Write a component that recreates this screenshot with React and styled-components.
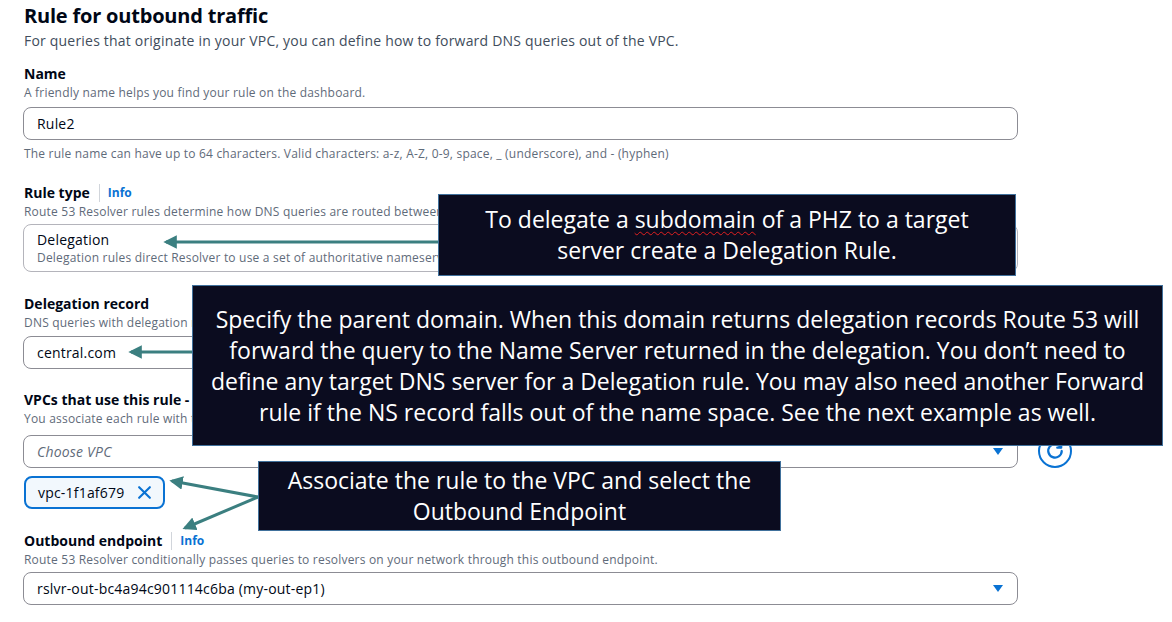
import React from "react"
import styled, { createGlobalStyle } from 'styled-components'

const Colors = {
  text: '#000716',
  muted: '#5f6b7a',
  blue: '#0972d3',
  border: '#8c8c94',
  teal: '#3b7f80',
  navy: '#0b0c1f',
  calloutBorder: '#41719c'
}

const GlobalStyle = createGlobalStyle`
  body {
    margin: 0;
    background: #fff;
    font-family: "Open Sans", "Liberation Sans", sans-serif;
    color: ${Colors.text};
  }
`

const Page = styled.div`
  position: relative;
  width: 1172px;
  height: 622px;
  overflow: hidden;
  padding: 4px 0 0 23px;
  box-sizing: border-box;
`

const Form = styled.div`
  width: 995px;
  display: flex;
  flex-direction: column;
  letter-spacing: 0.2px;
`

const Title = styled.h1`
  margin: 0 0 0 1px;
  font-size: 20px;
  line-height: 24px;
  font-weight: 700;
  letter-spacing: -0.2px;
`

const Subtitle = styled.p`
  margin: 3px 0 0 1px;
  font-size: 14px;
  line-height: 20px;
  color: #414d5c;
`

const Field = styled.div`
  display: flex;
  flex-direction: column;
  margin-top: ${props => props.top}px;
`

const Label = styled.div`
  display: flex;
  align-items: center;
  margin-left: 1px;
  font-size: 14px;
  line-height: 20px;
  font-weight: 700;
  letter-spacing: 0;
`

const Divider = styled.span`
  width: 1px;
  height: 18px;
  background: #d1d5db;
  margin: 0 8px 0 9px;
`

const InfoLink = styled.span`
  color: ${Colors.blue};
  font-size: 12px;
  font-weight: 700;
`

const Hint = styled.div`
  margin: 1px 0 0 1px;
  font-size: 12px;
  line-height: 16px;
  color: ${Colors.muted};
  white-space: nowrap;
`

const Constraint = styled(Hint)`
  margin-top: 6px;
`

const Box = styled.div`
  display: flex;
  align-items: center;
  justify-content: space-between;
  box-sizing: border-box;
  height: 33px;
  padding: 0 14px 0 13px;
  margin-top: ${props => props.top}px;
  border: 1px solid ${Colors.border};
  border-radius: 8px;
  font-size: 14px;
  color: ${Colors.text};
  background: #fff;
`

const Placeholder = styled.span`
  font-style: italic;
  color: ${Colors.muted};
`

const Card = styled.div`
  box-sizing: border-box;
  height: 48px;
  margin-top: 4px;
  padding: 5px 13px;
  border: 1px solid #b4b4bb;
  border-radius: 8px;
`

const CardTitle = styled.div`
  font-size: 14px;
  line-height: 20px;
`

const CardText = styled.div`
  font-size: 12px;
  line-height: 16px;
  color: ${Colors.muted};
  white-space: nowrap;
`

const SelectRow = styled.div`
  display: flex;
  align-items: center;
  gap: 20px;
  margin-top: 7px;
  width: 1050px;
`

const Grow = styled.div`
  width: 995px;
  flex: none;
`

const Caret = styled.span`
  width: 0;
  height: 0;
  border-left: 5px solid transparent;
  border-right: 5px solid transparent;
  border-top: 7px solid ${Colors.blue};
`

const RoundButton = styled.div`
  width: 34px;
  height: 34px;
  box-sizing: border-box;
  border: 2px solid ${Colors.blue};
  border-radius: 50%;
  display: flex;
  align-items: center;
  justify-content: center;
`

const Token = styled.div`
  align-self: flex-start;
  display: flex;
  align-items: center;
  gap: 13px;
  height: 33px;
  box-sizing: border-box;
  margin: 8px 0 0 1px;
  padding: 0 11px 0 12px;
  border: 2px solid ${Colors.blue};
  border-radius: 8px;
  background: #f2f8fd;
  font-size: 14px;
`

const Callout = styled.div`
  position: absolute;
  left: ${props => props.x}px;
  top: ${props => props.y}px;
  width: ${props => props.w}px;
  height: ${props => props.h}px;
  box-sizing: border-box;
  display: flex;
  align-items: center;
  justify-content: center;
  text-align: center;
  background: ${Colors.navy};
  border: 1.5px solid ${Colors.calloutBorder};
  color: #fff;
  font-family: "Open Sans", Lato, sans-serif;
  font-size: 23px;
  line-height: 31px;
  white-space: nowrap;
  z-index: 3;
`

const Squiggle = styled.span`
  text-decoration: underline wavy #e02020;
  text-decoration-thickness: 1px;
  text-underline-offset: 3px;
`

const Arrows = styled.svg`
  position: absolute;
  left: 0;
  top: 0;
  z-index: 2;
  pointer-events: none;
`

function Select ({ children }) {
  return (
    <Box top={0}>
      {children}
      <Caret />
    </Box>
  )
}

function App () {
  return (
    <Page>
      <GlobalStyle />
      <Form>
        <Title>Rule for outbound traffic</Title>
        <Subtitle>For queries that originate in your VPC, you can define how to forward DNS queries out of the VPC.</Subtitle>

        <Field top={13}>
          <Label>Name</Label>
          <Hint>A friendly name helps you find your rule on the dashboard.</Hint>
          <Box top={6}>Rule2</Box>
          <Constraint>The rule name can have up to 64 characters. Valid characters: a-z, A-Z, 0-9, space, _ (underscore), and - (hyphen)</Constraint>
        </Field>

        <Field top={21}>
          <Label>Rule type<Divider /><InfoLink>Info</InfoLink></Label>
          <Hint>Route 53 Resolver rules determine how DNS queries are routed between your VPC and your network.</Hint>
          <Card>
            <CardTitle>Delegation</CardTitle>
            <CardText>Delegation rules direct Resolver to use a set of authoritative nameservers for a domain.</CardText>
          </Card>
        </Field>

        <Field top={22}>
          <Label>Delegation record</Label>
          <Hint>DNS queries with delegation records for this domain are forwarded to the delegated name servers.</Hint>
          <Box top={5}>central.com</Box>
        </Field>

        <Field top={21}>
          <Label>VPCs that use this rule - optional</Label>
          <Hint>You associate each rule with the VPCs that you want the rule to apply to.</Hint>
          <SelectRow>
            <Grow>
              <Select><Placeholder>Choose VPC</Placeholder></Select>
            </Grow>
            <RoundButton>
              <svg width="18" height="18" viewBox="0 0 16 16" fill="none" stroke={Colors.blue} strokeWidth="2" strokeLinecap="round">
                <path d="M13 4.5A6 6 0 1 0 14 8" />
                <path d="M13.5 1.5v3.5H10" strokeLinejoin="round" />
              </svg>
            </RoundButton>
          </SelectRow>
          <Token>
            vpc-1f1af679
            <svg width="15" height="15" viewBox="0 0 14 14" stroke={Colors.blue} strokeWidth="2" strokeLinecap="round">
              <path d="M2 2l10 10M12 2L2 12" />
            </svg>
          </Token>
        </Field>

        <Field top={22}>
          <Label>Outbound endpoint<Divider /><InfoLink>Info</InfoLink></Label>
          <Hint>Route 53 Resolver conditionally passes queries to resolvers on your network through this outbound endpoint.</Hint>
          <Field top={4}>
            <Select>rslvr-out-bc4a94c901114c6ba (my-out-ep1)</Select>
          </Field>
        </Field>
      </Form>

      <Arrows width="1172" height="622">
        <defs>
          <marker id="head" viewBox="0 0 10 10" refX="8" refY="5" markerWidth="4.5" markerHeight="4.5" orient="auto-start-reverse">
            <path d="M0 0L10 5L0 10z" fill={Colors.teal} />
          </marker>
        </defs>
        <g stroke={Colors.teal} strokeWidth="3" fill="none">
          <line x1="438" y1="242" x2="166" y2="242" markerEnd="url(#head)" />
          <line x1="192" y1="352" x2="131" y2="352" markerEnd="url(#head)" />
          <line x1="258" y1="497" x2="172" y2="481" markerEnd="url(#head)" />
          <line x1="258" y1="497" x2="185" y2="528" markerEnd="url(#head)" />
        </g>
      </Arrows>

      <Callout x={438} y={194} w={578} h={82}>
        <div>To delegate a <Squiggle>subdomain</Squiggle> of a PHZ to a target<br />server create a Delegation Rule.</div>
      </Callout>
      <Callout x={192} y={285} w={971} h={161}>
        <div>
          Specify the parent domain. When this domain returns delegation records Route 53 will<br />
          forward the query to the Name Server returned in the delegation. You don’t need to<br />
          define any target DNS server for a Delegation rule. You may also need another Forward<br />
          rule if the NS record falls out of the name space. See the next example as well.
        </div>
      </Callout>
      <Callout x={258} y={461} w={523} h={70}>
        <div>Associate the rule to the VPC and select the<br />Outbound Endpoint</div>
      </Callout>
    </Page>
  )
}

export default App
